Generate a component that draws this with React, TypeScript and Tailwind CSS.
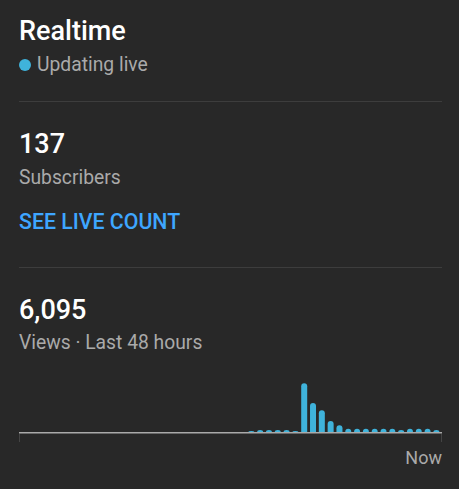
import React from "react";

// last 48 hours, one bar per hour (px heights, measured from the baseline)
const bars: number[] = [
  ...Array(26).fill(0),
  1, 2, 2, 2, 2, 1, 48.7, 29, 21.7, 11, 6.7, 3.3, 3.3, 3.3, 3.3, 3.3, 3.3, 2,
  3.3, 3.3, 3.3, 2,
];

function Chart() {
  const w = 423;
  const slot = w / 48;
  const base = 50;
  return (
    <svg width={w} height={60} viewBox={`0 0 ${w} 60`} className="block">
      {bars.map((h, i) => {
        if (h <= 0) return null;
        const x = i * slot + 0.2;
        const ry = Math.min(3, h);
        const top = base - h + ry;
        return (
          <path
            key={i}
            d={`M${x} ${base} L${x} ${top} A3 ${ry} 0 0 1 ${x + 6} ${top} L${x + 6} ${base} Z`}
            fill="#3fb3db"
          />
        );
      })}
      <rect x={0} y={base} width={w} height={1.5} fill="#aaaaaa" />
      <rect x={0} y={base + 2} width={1} height={8} fill="#444444" />
      <rect x={w - 1} y={base + 2} width={1} height={8} fill="#444444" />
    </svg>
  );
}

export default function App() {
  return (
    <div
      className="w-[459px] h-[489px] bg-[#282828] pl-[19px] pr-[17px] pt-[16px]"
      style={{ fontFamily: "Roboto, 'Noto Sans', sans-serif" }}
    >
      <h1 className="text-[27px] leading-[31px] font-medium text-white">Realtime</h1>
      <div className="flex items-center gap-[6px] mt-[6px] text-[19.3px] leading-[24px] text-[#aaaaaa]">
        <span className="w-[12px] h-[12px] rounded-full bg-[#3fb3db]" />
        Updating live
      </div>
      <div className="h-px bg-[#3d3d3d] mt-[24px]" />

      <div className="text-[27px] leading-[31px] font-medium text-white mt-[27px]">137</div>
      <div className="text-[19.3px] leading-[24px] text-[#aaaaaa] mt-[6px]">Subscribers</div>
      <div className="text-[21.3px] leading-[26px] font-medium text-[#3ea6ff] mt-[19px]">
        SEE LIVE COUNT
      </div>
      <div className="h-px bg-[#3d3d3d] mt-[32px]" />

      <div className="text-[27px] leading-[31px] font-medium text-white mt-[27px]">6,095</div>
      <div className="text-[19.3px] leading-[24px] text-[#aaaaaa] mt-[5px]">
        Views · Last 48 hours
      </div>
      <div className="mt-[27px]">
        <Chart />
      </div>
      <div className="text-right text-[18px] leading-[22px] text-[#aaaaaa] mt-[5px]">Now</div>
    </div>
  );
}
